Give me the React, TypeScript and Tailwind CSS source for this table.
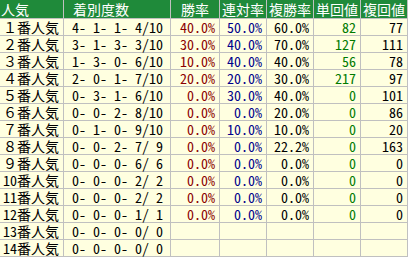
import React from "react";

const rows: string[][] = [
  ["１番人気", " 4- 1- 1- 4/10", "40.0%", "50.0%", "60.0%", "82", "77"],
  ["２番人気", " 3- 1- 3- 3/10", "30.0%", "40.0%", "70.0%", "127", "111"],
  ["３番人気", " 1- 3- 0- 6/10", "10.0%", "40.0%", "40.0%", "56", "78"],
  ["４番人気", " 2- 0- 1- 7/10", "20.0%", "20.0%", "30.0%", "217", "97"],
  ["５番人気", " 0- 3- 1- 6/10", "0.0%", "30.0%", "40.0%", "0", "101"],
  ["６番人気", " 0- 0- 2- 8/10", "0.0%", "0.0%", "20.0%", "0", "86"],
  ["７番人気", " 0- 1- 0- 9/10", "0.0%", "10.0%", "10.0%", "0", "20"],
  ["８番人気", " 0- 0- 2- 7/ 9", "0.0%", "0.0%", "22.2%", "0", "163"],
  ["９番人気", " 0- 0- 0- 6/ 6", "0.0%", "0.0%", "0.0%", "0", "0"],
  ["10番人気", " 0- 0- 0- 2/ 2", "0.0%", "0.0%", "0.0%", "0", "0"],
  ["11番人気", " 0- 0- 0- 2/ 2", "0.0%", "0.0%", "0.0%", "0", "0"],
  ["12番人気", " 0- 0- 0- 1/ 1", "0.0%", "0.0%", "0.0%", "0", "0"],
  ["13番人気", " 0- 0- 0- 0/ 0", "", "", "", "", ""],
  ["14番人気", " 0- 0- 0- 0/ 0", "", "", "", "", ""],
];

const colColors = [
  "text-black",
  "text-black",
  "text-[#8b0000]",
  "text-[#00008b]",
  "text-black",
  "text-[#007a00]",
  "text-black",
];

export default function App() {
  return (
    <div className="w-[409px] h-[257px] bg-white overflow-hidden">
      <div
        className="w-[408px] grid grid-cols-[63px_106px_48px_46px_46px_46px_46px] grid-rows-[18px_repeat(14,16px)] gap-px bg-[#c0c0c0] pr-px pb-px text-[14px] leading-[16px] font-['Noto_Sans_Mono_CJK_JP','Noto_Sans_CJK_JP',monospace]"
      >
        <div className="bg-[#1f8a3a] text-white flex items-center pl-px">人気</div>
        <div className="bg-[#1f8a3a] text-white flex items-center pl-[9px]">着別度数</div>
        <div className="bg-[#1f8a3a] text-white flex items-center justify-center">勝率</div>
        <div className="bg-[#1f8a3a] text-white flex items-center justify-center">連対率</div>
        <div className="bg-[#1f8a3a] text-white flex items-center justify-center">複勝率</div>
        <div className="bg-[#1f8a3a] text-white flex items-center justify-center">単回値</div>
        <div className="bg-[#1f8a3a] text-white flex items-center justify-center">複回値</div>
        {rows.map((r, i) =>
          r.map((c, j) => (
            <div
              key={`${i}-${j}`}
              className={`bg-[#ffffe0] flex items-center whitespace-pre ${colColors[j]} ${
                j === 0 ? "pl-[3px]" : j === 1 ? "pl-[1px]" : "justify-end pr-[4px]"
              }`}
            >
              {c}
            </div>
          ))
        )}
      </div>
    </div>
  );
}
